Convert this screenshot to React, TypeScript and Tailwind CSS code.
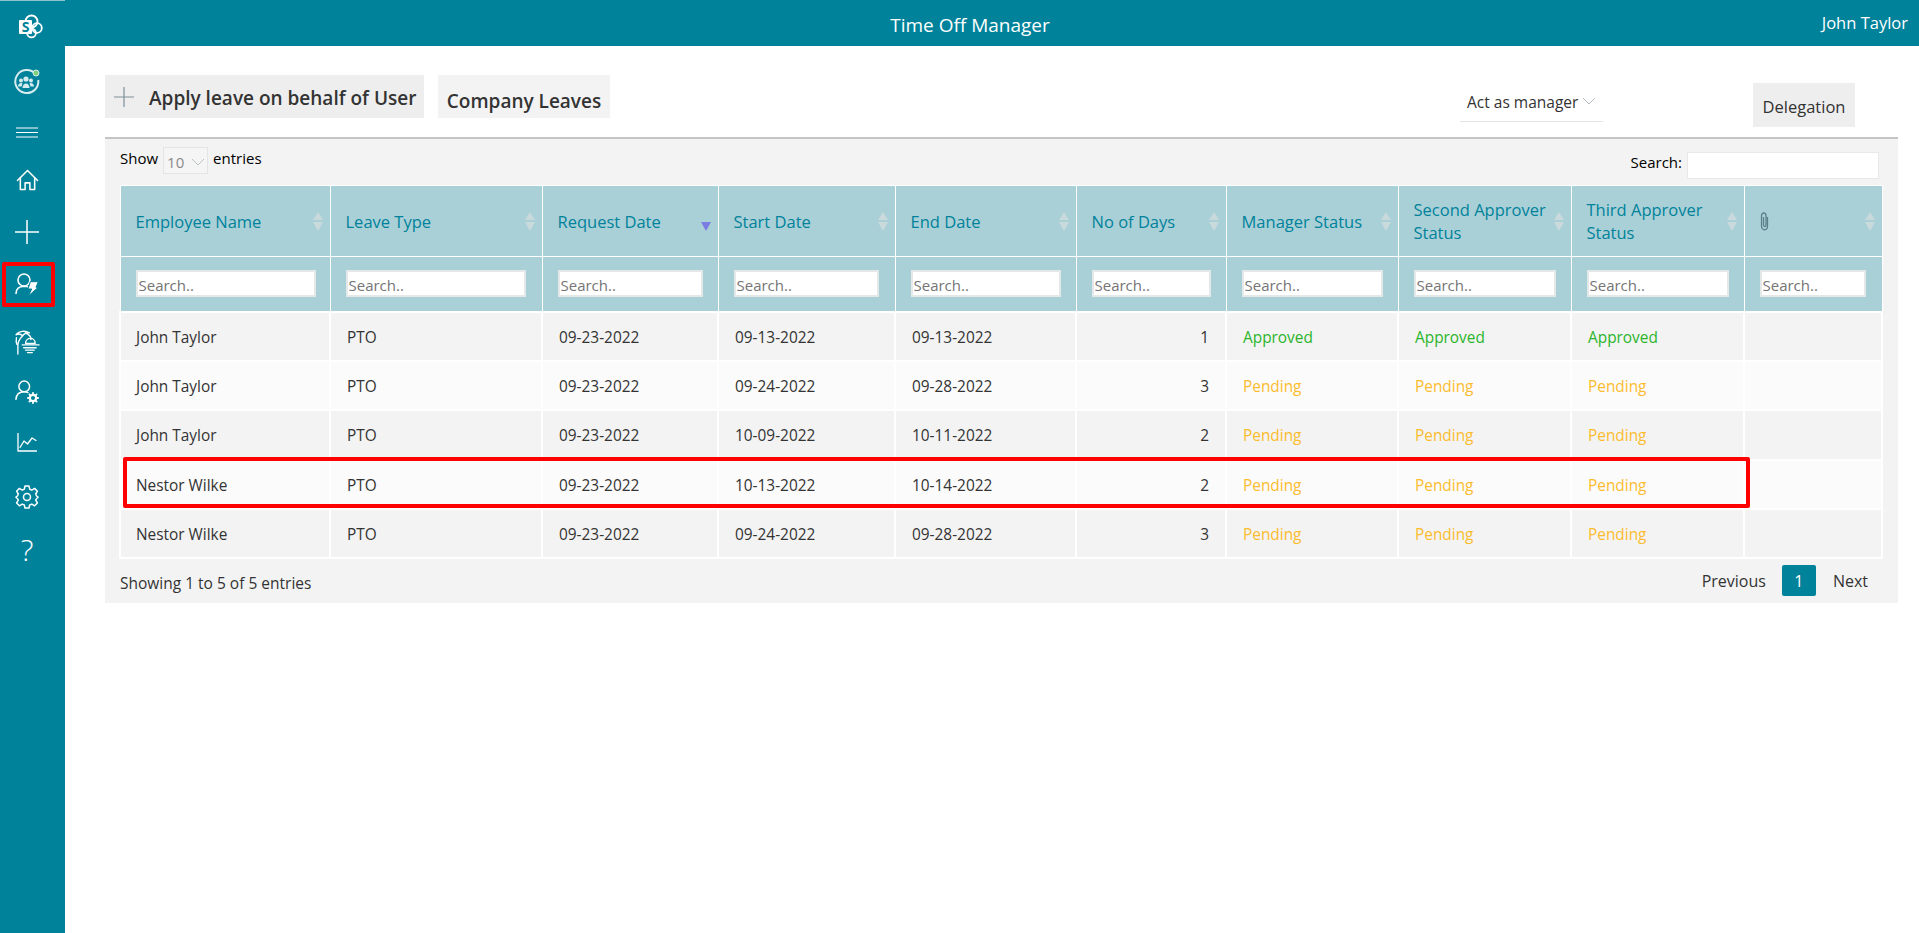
import React from "react";

const TEAL = "#00829b";
const cols = [
  { w: "w-[210px]", label: "Employee Name", input: "w-[180px]" },
  { w: "w-[212px]", label: "Leave Type", input: "w-[180px]" },
  { w: "w-[176px]", label: "Request Date", input: "w-[145px]", sorted: true },
  { w: "w-[177px]", label: "Start Date", input: "w-[145px]" },
  { w: "w-[181px]", label: "End Date", input: "w-[150px]" },
  { w: "w-[150px]", label: "No of Days", input: "w-[119px]" },
  { w: "w-[172px]", label: "Manager Status", input: "w-[141px]" },
  { w: "w-[173px]", label: "Second Approver Status", input: "w-[142px]" },
  { w: "w-[173px]", label: "Third Approver Status", input: "w-[142px]" },
  { w: "w-[138px]", label: "", input: "w-[106px]", clip: true },
];

const rows = [
  ["John Taylor", "PTO", "09-23-2022", "09-13-2022", "09-13-2022", "1", "Approved"],
  ["John Taylor", "PTO", "09-23-2022", "09-24-2022", "09-28-2022", "3", "Pending"],
  ["John Taylor", "PTO", "09-23-2022", "10-09-2022", "10-11-2022", "2", "Pending"],
  ["Nestor Wilke", "PTO", "09-23-2022", "10-13-2022", "10-14-2022", "2", "Pending"],
  ["Nestor Wilke", "PTO", "09-23-2022", "09-24-2022", "09-28-2022", "3", "Pending"],
];

function SortArrows({ active }: { active?: boolean }) {
  return (
    <svg width="10" height="19" viewBox="0 0 10 19" className="shrink-0 mt-[1px]">
      {!active && <path d="M5 0 L10 8 L0 8 Z" fill="#c9d9dc" />}
      <path d="M0 10 L10 10 L5 19 Z" fill={active ? "#7b7de2" : "#c9d9dc"} />
    </svg>
  );
}

const I = { fill: "none", stroke: "white", strokeWidth: 1.6, strokeLinecap: "round" as const, strokeLinejoin: "round" as const };

function SpLogo() {
  return (
    <svg width="25" height="25" viewBox="0 0 25 25" className="ml-[6px]">
      <circle cx="13.5" cy="7.5" r="6" fill="none" stroke="white" strokeWidth="1.8" />
      <circle cx="19" cy="14" r="4.8" fill="none" stroke="white" strokeWidth="1.8" />
      <circle cx="13.5" cy="19" r="4.4" fill="none" stroke="white" strokeWidth="1.8" />
      <rect x="1" y="6" width="13" height="14" rx="1" fill="white" />
      <text x="7.5" y="17.5" textAnchor="middle" fontFamily="'Open Sans',sans-serif" fontWeight="700" fontSize="14" fill={TEAL}>S</text>
    </svg>
  );
}

function TeamIcon() {
  return (
    <svg width="28" height="28" viewBox="0 0 28 28">
      <path d="M22.5 6 A11.5 11.5 0 1 0 25.2 12" fill="none" stroke="#d7ecef" strokeWidth="2" />
      <circle cx="13" cy="11" r="2.6" fill="#d7ecef" />
      <circle cx="8" cy="12.5" r="2" fill="#d7ecef" />
      <circle cx="18" cy="12.5" r="2" fill="#d7ecef" />
      <path d="M9.5 20 C9.5 14 16.5 14 16.5 20 Z" fill="#d7ecef" />
      <path d="M5 18.5 C5 14.5 9 14.5 9.5 15.5 L8.5 18.5 Z" fill="#d7ecef" />
      <path d="M21 18.5 C21 14.5 17 14.5 16.5 15.5 L17.5 18.5 Z" fill="#d7ecef" />
      <circle cx="23" cy="5" r="3" fill="#7ed07a" stroke="#d7ecef" strokeWidth="1" />
    </svg>
  );
}

function Hamburger() {
  return (
    <svg width="22" height="11" viewBox="0 0 22 11">
      <path d="M0 1H22M0 5.5H22M0 10H22" stroke="white" strokeWidth="1" />
    </svg>
  );
}

function Home() {
  return (
    <svg width="23" height="22" viewBox="0 0 24 23" {...I}>
      <path d="M1.5 12 L12 1.5 L22.5 12" />
      <path d="M4.5 9.5 V21.5 H9.5 V14.5 H14.5 V21.5 H19.5 V9.5" />
    </svg>
  );
}

function Plus() {
  return (
    <svg width="24" height="24" viewBox="0 0 24 24">
      <path d="M0 12H24M12 0V24" stroke="white" strokeWidth="1.5" />
    </svg>
  );
}

function UserBolt() {
  return (
    <svg width="24" height="24" viewBox="0 0 24 24" {...I}>
      <circle cx="9" cy="7" r="6" />
      <path d="M1 20.5 C1 16 4 13.5 9 13.2 C10.5 13.2 12 13.4 13 13.9" />
      <path d="M15.7 8.7 H23.3 L21 14.3 H23.3 L13.3 23 L16.7 16 H13.3 Z" fill="white" stroke={TEAL} strokeWidth="1" />
    </svg>
  );
}

function Beach() {
  return (
    <svg width="25" height="25" viewBox="0 0 26 26" {...I} strokeWidth="1.4">
      <path d="M1 5 C4 0.5 11 0.5 15 3 C11 3 9 4 8 6 C6 4 3 4 1 5 Z" />
      <path d="M8 6 C5 9 3 12 3 16 V25" />
      <path d="M1.5 8 C1 11 1 13 2 15" />
      <path d="M11 3 C15 5 17 8 16.5 10" />
      <path d="M11 14 C11 7 21 7 21 14 Z" />
      <path d="M7.5 15.5 H25" />
      <path d="M9 18.5 H22 M11 21 H20 M13 23.5 H18" />
    </svg>
  );
}

function UserGear() {
  return (
    <svg width="24" height="24" viewBox="0 0 26 26" {...I}>
      <circle cx="10" cy="7" r="5.8" />
      <path d="M1 21 C1.5 15 5 12.8 10 12.8 C11.5 12.8 13 13 14 13.6" />
      <circle cx="19.5" cy="19.5" r="3.4" strokeWidth="2.4" />
      <path d="M19.5 14V15.5M19.5 23.5V25M14 19.5H15.5M23.5 19.5H25M15.6 15.6L16.6 16.6M22.4 22.4L23.4 23.4M15.6 23.4L16.6 22.4M22.4 16.6L23.4 15.6" strokeWidth="2" />
    </svg>
  );
}

function Chart() {
  return (
    <svg width="20" height="19" viewBox="0 0 20 19" {...I} strokeWidth="1.3">
      <path d="M1 0.5 V18 H19.5" />
      <path d="M3 14.5 L7 8 L10.5 11 L15 5 L19 7.5" />
    </svg>
  );
}

function Gear() {
  return (
    <svg width="24" height="24" viewBox="0 0 24 24" {...I} strokeWidth="1.5">
      <circle cx="12" cy="12" r="3.5" />
      <path d="M10 1 H14 L14.7 4.2 L16.8 5.1 L19.6 3.4 L22.4 6.2 L20.7 9 L21.6 11 L23 12 L23 12.5 L21.6 13.5 L20.7 15.2 L22.4 18 L19.6 20.8 L16.8 19.1 L14.7 20 L14 23 H10 L9.3 20 L7.2 19.1 L4.4 20.8 L1.6 18 L3.3 15.2 L2.4 13.5 L1 12.5 L1 12 L2.4 11 L3.3 9 L1.6 6.2 L4.4 3.4 L7.2 5.1 L9.3 4.2 Z" />
    </svg>
  );
}

function Clip() {
  return (
    <svg width="9" height="19" viewBox="0 0 9 19" fill="none" stroke="#5d7f8a" strokeWidth="1.3">
      <path d="M7.5 5 V14 C7.5 19 1.5 19 1.5 14 V4 C1.5 0 6 0 6 4 V13 C6 15 3.5 15 3.5 13 V5" />
    </svg>
  );
}

function Chevron({ color = "#b5bcc0" }: { color?: string }) {
  return (
    <svg width="14" height="8" viewBox="0 0 14 8" fill="none" stroke={color} strokeWidth="1">
      <path d="M1 1 L7 7 L13 1" />
    </svg>
  );
}

function FilterInput({ cls }: { cls: string }) {
  return (
    <input
      readOnly
      placeholder="Search.."
      className={`${cls} block h-[27px] bg-white border-2 border-[#e4e8e9] px-[1px] pt-[2px] text-[15px] text-[#333] placeholder:text-[#757575] outline-none`}
    />
  );
}

const cell = "border-2 border-white pt-[2px]";

export default function App() {
  return (
    <div className="relative flex h-[933px] w-[1919px] overflow-hidden bg-white text-[#333] font-['Open_Sans','Noto_Sans',sans-serif]">
      <div className="absolute left-0 right-0 top-0 h-px bg-[#8fc2cd]" />
      <aside className="w-[65px] h-full shrink-0 bg-[#00829b] flex flex-col items-center pr-[11px]">
        <div className="h-[52px] flex items-center justify-center"><SpLogo /></div>
        <div className="h-[60px] flex items-center justify-center"><TeamIcon /></div>
        <div className="h-[40px] flex items-center justify-center"><Hamburger /></div>
        <div className="h-[56px] flex items-center justify-center"><Home /></div>
        <div className="h-[48px] flex items-center justify-center"><Plus /></div>
        <div className="h-[58px] flex items-center justify-center"><UserBolt /></div>
        <div className="h-[56px] flex items-center justify-center"><Beach /></div>
        <div className="h-[44px] flex items-center justify-center"><UserGear /></div>
        <div className="h-[56px] flex items-center justify-center"><Chart /></div>
        <div className="h-[54px] flex items-center justify-center"><Gear /></div>
        <div className="h-[52px] flex items-center justify-center text-white text-[30px] font-light leading-none">?</div>
      </aside>

      <main className="flex-1 min-w-0 flex flex-col">
        <header className="h-[46px] shrink-0 bg-[#00829b] flex items-center text-white relative">
          <div className="flex-1 text-center pr-[44px] text-[19px] pt-[5px]">Time Off Manager</div>
          <div className="absolute right-[11px] top-[13px] text-[16.5px] leading-[20px]">John Taylor</div>
        </header>

        <div className="ml-[40px] mr-[21px] mt-[29px] h-[64px] flex items-start border-b-2 border-[#c4c4c4] relative">
          <button className="h-[43px] w-[319px] bg-[#eeeeee] flex items-center pl-[9px] text-[19px] font-semibold text-[#333] whitespace-nowrap">
            <svg width="20" height="20" viewBox="0 0 20 20" className="mr-[15px] shrink-0"><path d="M0 10H20M10 0V20" stroke="#7d8f9a" strokeWidth="1.2" /></svg>
            <span className="pt-[4px]">Apply leave on behalf of User</span>
          </button>
          <button className="h-[43px] w-[172px] ml-[14px] bg-[#f3f3f3] text-[19px] font-semibold text-[#333] pt-[9px] whitespace-nowrap">Company Leaves</button>
          <div className="ml-auto flex items-start">
            <div className="w-[143px] h-[40px] mt-[7px] border-b border-[#e4e4e4] flex items-start pl-[7px] pt-[10px] text-[15.5px] leading-[20px] text-[#333] gap-[4px] whitespace-nowrap">
              Act as manager
              <span className="mt-[5px]"><Chevron /></span>
            </div>
            <button className="w-[102px] h-[44px] ml-[150px] mr-[43px] mt-[8px] pt-[4px] bg-[#eeeeee] text-[16.5px]">Delegation</button>
          </div>
        </div>

        <section className="ml-[40px] mr-[21px] h-[464px] bg-[#f3f3f3] px-[15px] text-[15px] relative">
          <div className="h-[46px] flex justify-between pr-[4px]">
            <div className="flex items-start pt-[9px] text-black gap-[5px] leading-[20px]">
              <span>Show</span>
              <div className="w-[45px] h-[27px] -mt-[1px] bg-[#f5f5f5] border border-[#e4e4e4] text-[#8a8a8a] flex items-center justify-between pl-[3px] pr-[2px] pt-[3px]">
                10
                <Chevron color="#bcc3c7" />
              </div>
              <span>entries</span>
            </div>
            <div className="flex items-start pt-[13px] text-black gap-[5px] leading-[20px]">
              <span>Search:</span>
              <input readOnly className="w-[192px] h-[27px] bg-white border border-[#e8e8e8] outline-none" />
            </div>
          </div>

          <table className="table-fixed border-collapse w-[1762px] -ml-px">
            <colgroup>
              {cols.map((c) => <col key={c.label + c.w} className={c.w} />)}
            </colgroup>
            <thead>
              <tr className="h-[71px] bg-[#aad0d7]">
                {cols.map((c, i) => (
                  <th key={i} className="border border-white pl-[15px] pr-[7px] font-normal text-left align-middle text-[#00829b] text-[16.5px] leading-[23px]">
                    <div className="flex items-center justify-between">
                      <span className="pr-[1px]">{c.clip ? <Clip /> : c.label}</span>
                      <SortArrows active={c.sorted} />
                    </div>
                  </th>
                ))}
              </tr>
              <tr className="h-[55px] bg-[#aad0d7]">
                {cols.map((c, i) => (
                  <th key={i} className="border border-white pl-[15px] font-normal text-left">
                    <FilterInput cls={c.input} />
                  </th>
                ))}
              </tr>
            </thead>
            <tbody className="text-[15.4px]">
              {rows.map((r, ri) => (
                <tr key={ri} className={`h-[49.4px] ${ri % 2 === 0 ? "bg-[#f3f3f3]" : "bg-[#fbfbfb]"}`}>
                  <td className={`${cell} pl-[15px] text-[#333]`}>{r[0]}</td>
                  <td className={`${cell} pl-[16px] text-[#333]`}>{r[1]}</td>
                  <td className={`${cell} pl-[16px] text-[#333]`}>{r[2]}</td>
                  <td className={`${cell} pl-[16px] text-[#333]`}>{r[3]}</td>
                  <td className={`${cell} pl-[16px] text-[#333]`}>{r[4]}</td>
                  <td className={`${cell} pr-[16px] text-right text-[#333]`}>{r[5]}</td>
                  {[0, 1, 2].map((k) => (
                    <td key={k} className={`${cell} pl-[16px] ${r[6] === "Approved" ? "text-[#2cb52c]" : "text-[#fbbc2e]"}`}>{r[6]}</td>
                  ))}
                  <td className={cell} />
                </tr>
              ))}
            </tbody>
          </table>

          <div className="flex justify-between items-start pr-[1px]">
            <div className="pt-[14px] leading-[20px] text-[15.5px]">Showing 1 to 5 of 5 entries</div>
            <div className="flex items-center pt-[6px] text-[16px] mr-[14px]">
              <span>Previous</span>
              <span className="w-[34px] h-[31px] ml-[16px] mr-[17px] rounded-[2px] bg-[#00829b] text-white flex items-center justify-center">1</span>
              <span>Next</span>
            </div>
          </div>
        </section>
      </main>

      <div className="absolute left-[2px] top-[262px] w-[53px] h-[45px] border-[4px] border-[#ff0000] rounded-[2px]" />
      <div className="absolute left-[123px] top-[457px] w-[1627px] h-[51px] border-[4px] border-[#ff0000] rounded-[2px]" />
    </div>
  );
}
